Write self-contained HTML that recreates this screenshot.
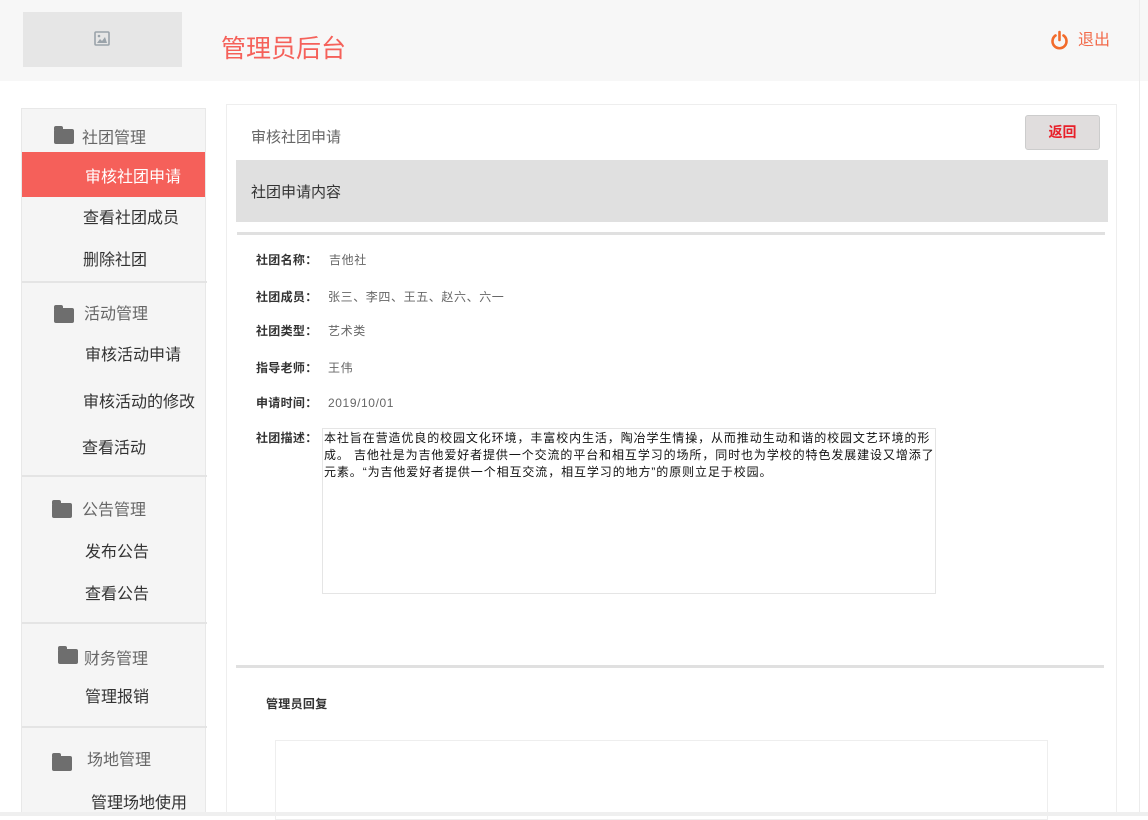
<!DOCTYPE html>
<html><head><meta charset="utf-8"><style>
*{margin:0;padding:0;box-sizing:border-box}
body{width:1148px;height:816px;overflow:hidden;background:#fff;font-family:"Liberation Sans","Noto Sans CJK SC",sans-serif;position:relative}
.a{position:absolute;white-space:nowrap}
.sb{position:absolute;left:21px;top:108px;width:185px;height:705px;background:#f5f5f5;border:1px solid #e8e8e8}
.it{position:absolute;font-size:16px;color:#333;line-height:20px}
.hd{position:absolute;font-size:16px;color:#666;line-height:20px}
.sep{position:absolute;left:0;width:185px;height:2px;background:#e4e4e4}
.fd{position:absolute;width:20px;height:15px;background:#6e6e6e;border-radius:2px}
.fd:before{content:"";position:absolute;left:0;top:-3px;width:9px;height:4px;background:#6e6e6e;border-radius:2px 2px 0 0}
.lb{position:absolute;left:256px;font-size:12px;font-weight:bold;color:#333;line-height:16px;letter-spacing:0.3px}
.vl{position:absolute;left:328px;font-size:12px;color:#666;line-height:16px;letter-spacing:0.6px}
</style></head><body>
<div class="a" style="left:0;top:0;width:1148px;height:81px;background:#f7f7f7"></div>
<div class="a" style="left:23px;top:12px;width:159px;height:55px;background:#e6e6e6"></div>
<svg class="a" style="left:94px;top:31px" width="16" height="15" viewBox="0 0 16 15"><rect x="1" y="1" width="14" height="13" rx="1" fill="none" stroke="#9aa3aa" stroke-width="1.6"/><circle cx="5" cy="5" r="1.3" fill="#9aa3aa"/><path d="M3 12l3-4 2 2 3-4 2 6z" fill="#9aa3aa"/></svg>
<div class="a" style="left:221px;top:33px;font-size:25px;color:#f5615a;line-height:32px">管理员后台</div>
<svg class="a" style="left:1050px;top:30px" width="19" height="20" viewBox="0 0 19 20"><path d="M5.5 5.5A7 7 0 1 0 13.5 5.5" fill="none" stroke="#f26b2b" stroke-width="2.6" stroke-linecap="round"/><line x1="9.5" y1="2" x2="9.5" y2="10" stroke="#f26b2b" stroke-width="2.6" stroke-linecap="round"/></svg>
<div class="a" style="left:1078px;top:31px;font-size:16px;color:#f26b4b;line-height:20px">退出</div>
<div class="a" style="left:1139px;top:0;width:1px;height:813px;background:#ececec"></div>

<div class="sb">
<div class="fd" style="left:32px;top:20px"></div><div class="hd" style="left:60px;top:20px">社团管理</div>
<div class="a" style="left:0;top:43px;width:183px;height:45px;background:#f5605a"></div>
<div class="it" style="left:63px;top:59px;color:#fff">审核社团申请</div>
<div class="it" style="left:61px;top:100px">查看社团成员</div>
<div class="it" style="left:61px;top:142px">删除社团</div>
<div class="sep" style="top:172px"></div>
<div class="fd" style="left:32px;top:199px"></div><div class="hd" style="left:62px;top:196px">活动管理</div>
<div class="it" style="left:63px;top:237px">审核活动申请</div>
<div class="it" style="left:61px;top:284px">审核活动的修改</div>
<div class="it" style="left:60px;top:330px">查看活动</div>
<div class="sep" style="top:366px"></div>
<div class="fd" style="left:30px;top:394px"></div><div class="hd" style="left:60px;top:392px">公告管理</div>
<div class="it" style="left:63px;top:434px">发布公告</div>
<div class="it" style="left:63px;top:476px">查看公告</div>
<div class="sep" style="top:513px"></div>
<div class="fd" style="left:36px;top:540px"></div><div class="hd" style="left:62px;top:541px">财务管理</div>
<div class="it" style="left:63px;top:579px">管理报销</div>
<div class="sep" style="top:617px"></div>
<div class="fd" style="left:30px;top:647px"></div><div class="hd" style="left:65px;top:642px">场地管理</div>
<div class="it" style="left:69px;top:685px">管理场地使用</div>
</div>

<div class="a" style="left:226px;top:104px;width:891px;height:712px;border:1px solid #eee;background:#fff"></div>
<div class="a" style="left:251px;top:128px;font-size:15px;color:#666;line-height:20px">审核社团申请</div>
<div class="a" style="left:1025px;top:115px;width:75px;height:35px;background:#e0dddd;border:1px solid #ccc;border-radius:3px;text-align:center;line-height:33px;font-size:14px;font-weight:bold;color:#e8202a">返回</div>
<div class="a" style="left:236px;top:160px;width:872px;height:62px;background:#e0e0e0"></div>
<div class="a" style="left:251px;top:183px;font-size:15px;color:#333;line-height:20px">社团申请内容</div>
<div class="a" style="left:237px;top:232px;width:868px;height:3px;background:#e0e0e0"></div>
<div class="lb" style="top:252px">社团名称：</div><div class="vl" style="top:252px;left:329px">吉他社</div>
<div class="lb" style="top:289px">社团成员：</div><div class="vl" style="top:289px">张三、李四、王五、赵六、六一</div>
<div class="lb" style="top:323px">社团类型：</div><div class="vl" style="top:323px">艺术类</div>
<div class="lb" style="top:360px">指导老师：</div><div class="vl" style="top:360px">王伟</div>
<div class="lb" style="top:395px">申请时间：</div><div class="vl" style="top:395px">2019/10/01</div>
<div class="lb" style="top:430px">社团描述：</div>
<div class="a" style="left:322px;top:428px;width:614px;height:166px;border:1px solid #e5e5e5;font-size:12px;line-height:17px;color:#111;padding:1px 0 0 1px;letter-spacing:0.9px;overflow:hidden">本社旨在营造优良的校园文化环境，丰富校内生活，陶冶学生情操，从而推动生动和谐的校园文艺环境的形<br>成。 吉他社是为吉他爱好者提供一个交流的平台和相互学习的场所，同时也为学校的特色发展建设又增添了新<br>元素。“为吉他爱好者提供一个相互交流，相互学习的地方”的原则立足于校园。</div>
<div class="a" style="left:236px;top:665px;width:868px;height:3px;background:#e0e0e0"></div>
<div class="lb" style="left:266px;top:696px">管理员回复</div>
<div class="a" style="left:275px;top:740px;width:773px;height:80px;border:1px solid #eee"></div>
<div class="a" style="left:0;top:812px;width:1148px;height:4px;background:#efefef"></div>
</body></html>
